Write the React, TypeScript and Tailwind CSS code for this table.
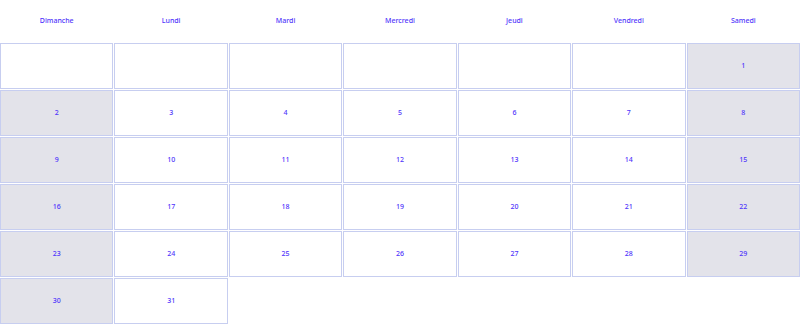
const days = ['Dimanche', 'Lundi', 'Mardi', 'Mercredi', 'Jeudi', 'Vendredi', 'Samedi']

// month starting on a Saturday, 31 days
const firstDay = 6
const totalDays = 31

export default function App() {
  const cells: (number | null)[] = []
  for (let i = 0; i < firstDay; i++) cells.push(null)
  for (let d = 1; d <= totalDays; d++) cells.push(d)

  return (
    <div className="w-[800px] h-[333px] bg-white font-['Noto_Sans',sans-serif] text-[7px] font-medium text-[#4f35fb]">
      <div className="grid grid-cols-7 gap-[1px]">
        {days.map((day) => (
          <div key={day} className="h-[42px] flex items-center justify-center">
            {day}
          </div>
        ))}
        {cells.map((d, i) => {
          const col = i % 7
          const weekend = d !== null && (col === 0 || col === 6)
          return (
            <div
              key={i}
              className={`h-[46px] flex items-center justify-center border border-[#c7cef0] ${weekend ? 'bg-[#e3e3ea]' : 'bg-white'}`}
            >
              {d}
            </div>
          )
        })}
      </div>
    </div>
  )
}
